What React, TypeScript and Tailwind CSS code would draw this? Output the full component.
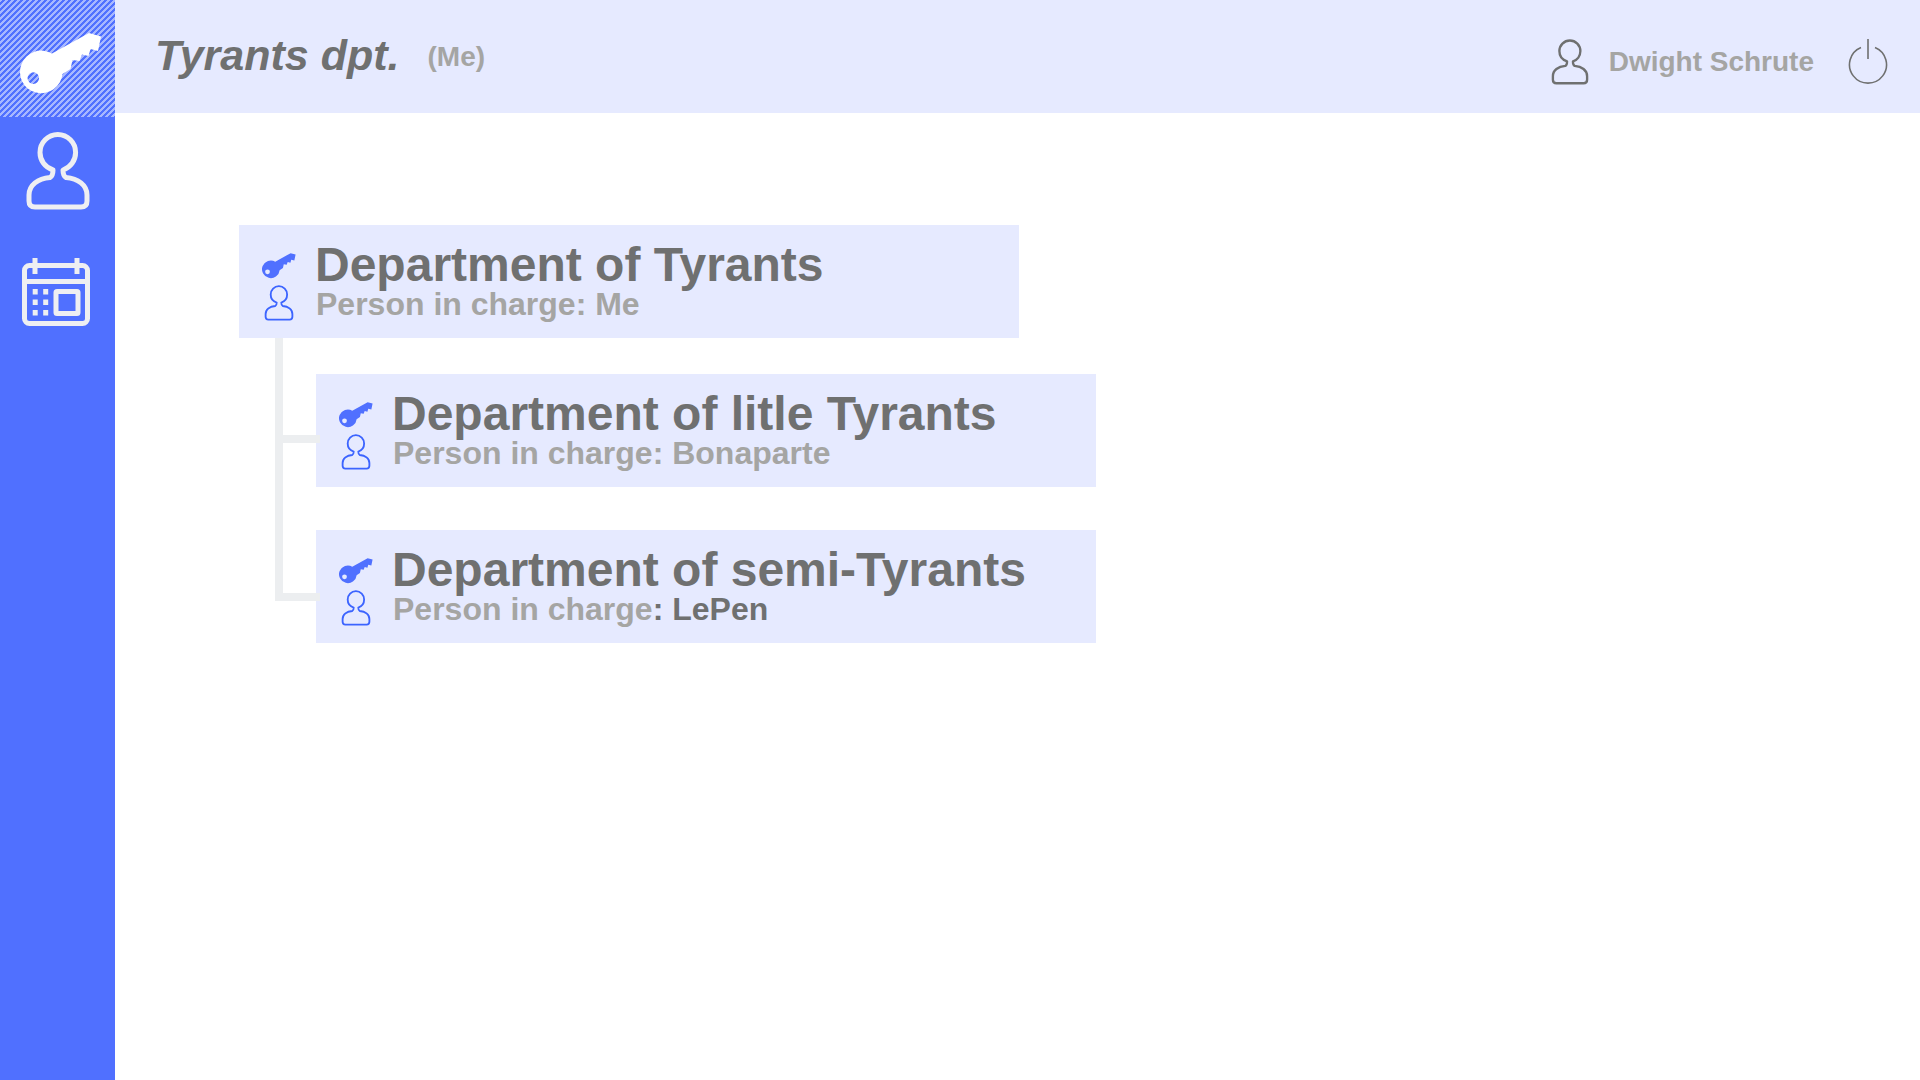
type Department = {
  name: string;
  label: string;
  person: string;
  highlighted?: boolean;
};

const root: Department = { name: "Department of Tyrants", label: "Person in charge", person: "Me" };

const children: (Department & { gap: string; elbow: string })[] = [
  { name: "Department of litle Tyrants", label: "Person in charge", person: "Bonaparte", gap: "pt-9", elbow: "h-[105px]" },
  { name: "Department of semi-Tyrants", label: "Person in charge", person: "LePen", highlighted: true, gap: "pt-[43px]", elbow: "h-[114px]" },
];

function KeyIcon({ className }: { className: string }) {
  return (
    <svg viewBox="0 0 82 62" className={className} fill="currentColor" aria-hidden="true">
      <path
        fillRule="evenodd"
        d="M32 20.5 L69 0 L81 3.5 L78 18 L70.5 16 L68.5 23 L62 21.5 L59.5 28 L52.5 27 L50.5 36 L42.5 41 A21.3 21.3 0 1 1 32 20.5 Z M13.3 39.3 a5.8 5.8 0 1 0 0 11.6 a5.8 5.8 0 1 0 0 -11.6 Z"
      />
    </svg>
  );
}

function PersonIcon({ className, stroke }: { className: string; stroke: number }) {
  return (
    <svg viewBox="0 0 64 78" className={className} fill="none" stroke="currentColor" strokeWidth={stroke} strokeLinejoin="round" aria-hidden="true">
      <path d="M27 38 C19 35.5 14 28.5 14 20.5 A17.8 18 0 0 1 49.6 20.5 C49.6 28.5 44.5 35.5 37 38 C37 41.5 38 44.5 40 45.5 C52 46.5 61 53 61 63 V69 Q61 75 55 75 H9 Q3 75 3 69 V63 C3 53 12 46.5 24 45.5 C26 44.5 27 41.5 27 38 Z" />
    </svg>
  );
}

function CalendarIcon({ className }: { className: string }) {
  return (
    <svg viewBox="0 0 68 68" className={className} fill="none" stroke="currentColor" strokeWidth="5" aria-hidden="true">
      <rect x="2.5" y="7.5" width="63" height="58" rx="5" />
      <path d="M2.5 23.5 H65.5 M13 0 V16 M55 0 V16" />
      <rect x="34" y="33.5" width="22" height="22" rx="1" />
      <path strokeDasharray="5.5 5" d="M13.2 31 V58 M23.7 31 V58" />
    </svg>
  );
}

function PowerIcon({ className }: { className: string }) {
  return (
    <svg viewBox="0 0 40 46" className={className} fill="none" stroke="currentColor" strokeWidth="1.6" aria-hidden="true">
      <path d="M13 8.5 A18.5 18.5 0 1 0 27 8.5 M20 0 V20" />
    </svg>
  );
}

function DepartmentCard({ department }: { department: Department }) {
  return (
    <article className="flex h-[113px] w-[780px] gap-[19px] bg-[#e6eaff] pl-[23px] pt-4">
      <div className="flex w-[34px] flex-col items-center pt-3 text-[#5070ff]">
        <KeyIcon className="h-[26px] w-[34px]" />
        <PersonIcon className="mt-1.5 h-[36px] w-[30px] text-[#3c64ff]" stroke={4} />
      </div>
      <div className="font-bold">
        <h2 className="text-[48px] leading-[47px] text-[#6f7070]">{department.name}</h2>
        <p className="pl-px text-[32px] leading-[32px] text-[#a5a5a3]">
          {department.label}
          <span className={department.highlighted ? "text-[#6f7070]" : ""}>: {department.person}</span>
        </p>
      </div>
    </article>
  );
}

export default function App() {
  return (
    <div className="flex min-h-screen bg-white font-['Liberation_Sans',Arial,sans-serif]">
      <nav className="flex w-[115px] shrink-0 flex-col bg-[#5070ff]" aria-label="Main">
        <a
          href="#departments"
          aria-label="Departments"
          className="flex h-[117px] items-center justify-center bg-[linear-gradient(135deg,#a7b7ff_25%,#5070ff_25%,#5070ff_50%,#a7b7ff_50%,#a7b7ff_75%,#5070ff_75%)] bg-[length:6px_6px] pl-1.5 pt-2.5 text-white"
        >
          <KeyIcon className="h-[62px] w-[82px]" />
        </a>
        <a href="#people" aria-label="People" className="mt-[15px] flex justify-center pl-px text-[#eeeff2]">
          <PersonIcon className="h-[78px] w-[64px]" stroke={5} />
        </a>
        <a href="#calendar" aria-label="Calendar" className="mt-12 flex justify-center pr-1 text-[#eeeff2]">
          <CalendarIcon className="size-[68px]" />
        </a>
      </nav>
      <div className="flex grow flex-col">
        <header className="flex h-[113px] items-center justify-between bg-[#e6eaff] pl-10 pr-8 font-bold">
          <div className="flex items-center gap-7">
            <h1 className="pb-1 text-[43px] italic leading-[48px] text-[#6f7070]">Tyrants dpt.</h1>
            <span className="text-[28px] leading-8 text-[#a5a5a3]">(Me)</span>
          </div>
          <div className="flex items-center pt-2.5">
            <PersonIcon className="h-[46px] w-[38px] text-[#6f7070]" stroke={4} />
            <span className="ml-5 text-[28px] leading-8 text-[#a5a5a3]">Dwight Schrute</span>
            <button type="button" aria-label="Log out" className="ml-[34px] cursor-pointer text-[#6f7070]">
              <PowerIcon className="h-[46px] w-10" />
            </button>
          </div>
        </header>
        <main id="departments" className="pl-[124px] pt-28">
          <DepartmentCard department={root} />
          <ul className="ml-9">
            {children.map((child, i) => (
              <li key={child.name} className="flex">
                <div className="z-10 -mr-1 flex w-[45px] flex-col">
                  <div className={`border-b-8 border-l-8 border-[#eceef0] ${child.elbow}`} />
                  {i < children.length - 1 && <div className="grow border-l-8 border-[#eceef0]" />}
                </div>
                <div className={child.gap}>
                  <DepartmentCard department={child} />
                </div>
              </li>
            ))}
          </ul>
        </main>
      </div>
    </div>
  );
}
